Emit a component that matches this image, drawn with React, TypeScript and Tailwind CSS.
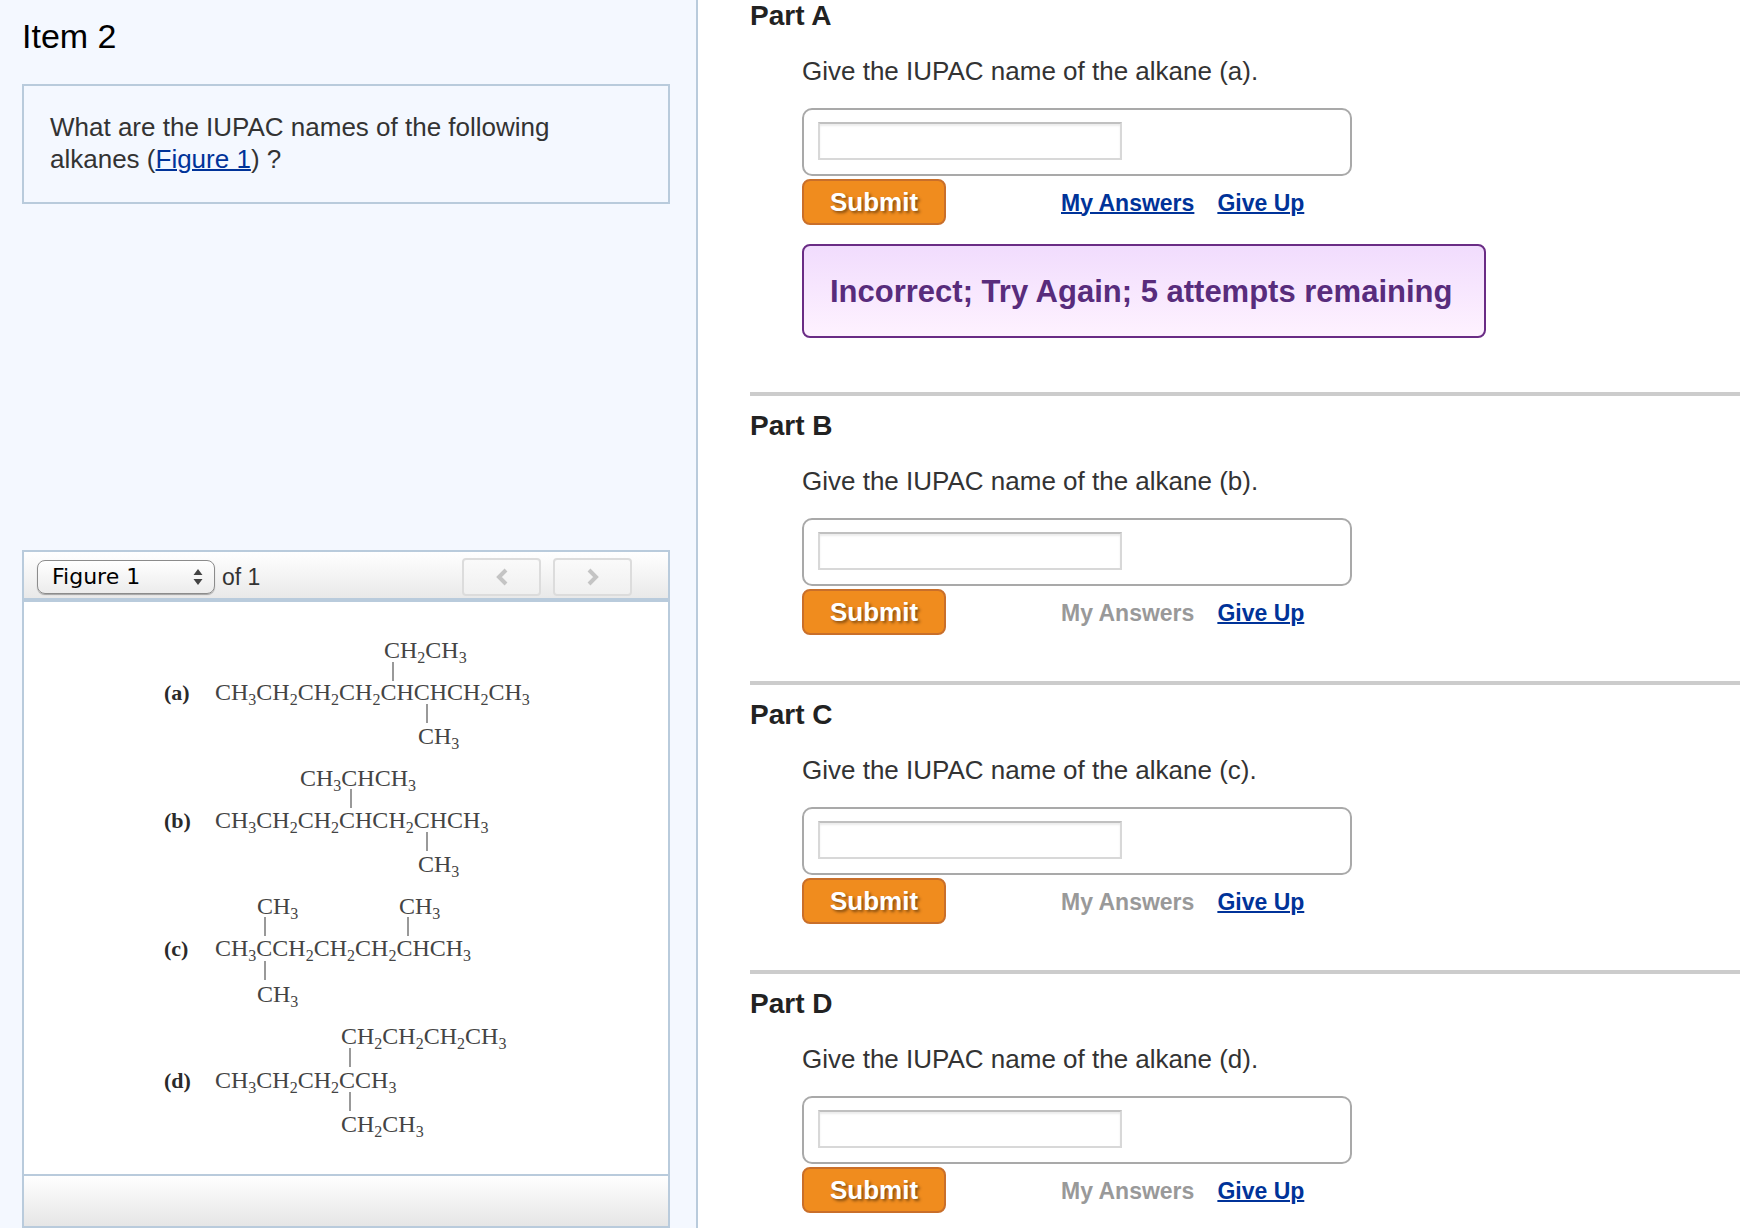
import { useState } from 'react';

type Part = {
  id: string;
  hasAnswers?: boolean;
  feedback?: string;
};

type Formula = { x: number; y: number; value: string };
type Bond = { x: number; y: number };
type Alkane = { label: string; y: number; formulas: Formula[]; bonds: Bond[] };

const parts: Part[] = [
  { id: 'A', hasAnswers: true, feedback: 'Incorrect; Try Again; 5 attempts remaining' },
  { id: 'B' },
  { id: 'C' },
  { id: 'D' },
];

const alkanes: Alkane[] = [
  {
    label: '(a)',
    y: 98,
    formulas: [
      { x: 360, y: 56, value: 'CH2CH3' },
      { x: 191, y: 98, value: 'CH3CH2CH2CH2CHCHCH2CH3' },
      { x: 394, y: 142, value: 'CH3' },
    ],
    bonds: [
      { x: 368, y: 60 },
      { x: 402, y: 102 },
    ],
  },
  {
    label: '(b)',
    y: 226,
    formulas: [
      { x: 276, y: 184, value: 'CH3CHCH3' },
      { x: 191, y: 226, value: 'CH3CH2CH2CHCH2CHCH3' },
      { x: 394, y: 270, value: 'CH3' },
    ],
    bonds: [
      { x: 326, y: 187 },
      { x: 402, y: 230 },
    ],
  },
  {
    label: '(c)',
    y: 354,
    formulas: [
      { x: 233, y: 312, value: 'CH3' },
      { x: 375, y: 312, value: 'CH3' },
      { x: 191, y: 354, value: 'CH3CCH2CH2CH2CHCH3' },
      { x: 233, y: 400, value: 'CH3' },
    ],
    bonds: [
      { x: 240, y: 315 },
      { x: 383, y: 315 },
      { x: 240, y: 359 },
    ],
  },
  {
    label: '(d)',
    y: 486,
    formulas: [
      { x: 317, y: 442, value: 'CH2CH2CH2CH3' },
      { x: 191, y: 486, value: 'CH3CH2CH2CCH3' },
      { x: 317, y: 530, value: 'CH2CH3' },
    ],
    bonds: [
      { x: 325, y: 446 },
      { x: 325, y: 490 },
    ],
  },
];

function FormulaText({ x, y, value }: Formula) {
  // Split into atoms and subscript counts, e.g. CH | 3 | CH | 2
  const pieces = value.split(/(\d)/).filter(Boolean);

  return (
    <text x={x} y={y} fontSize={24} fill="#444">
      {pieces.map((piece, i) => {
        const isCount = /\d/.test(piece);
        const afterCount = i > 0 && !isCount;
        return (
          <tspan key={i} fontSize={isCount ? 16 : 24} dy={isCount ? 5 : afterCount ? -5 : 0}>
            {piece}
          </tspan>
        );
      })}
    </text>
  );
}

function AlkaneFigure() {
  return (
    <svg
      viewBox="0 0 644 572"
      className="block w-full font-['Liberation_Serif',serif]"
      role="img"
      aria-label="Alkane structures"
    >
      {alkanes.map((alkane) => (
        <g key={alkane.label}>
          <text x={140} y={alkane.y} fontSize={22} fontWeight="bold" fill="#2a2a2a">
            {alkane.label}
          </text>
          {alkane.formulas.map((formula, i) => (
            <FormulaText key={i} {...formula} />
          ))}
          {alkane.bonds.map((bond, i) => (
            <rect key={i} x={bond.x} y={bond.y} width={2} height={19} fill="#999" />
          ))}
        </g>
      ))}
    </svg>
  );
}

function PagerButton({ label, points }: { label: string; points: string }) {
  return (
    <button
      type="button"
      disabled
      aria-label={label}
      className="flex h-[38px] w-[79px] items-center justify-center rounded-sm border-2 border-[#dcdcdc] bg-linear-to-b from-[#fafafa] to-[#f0f0f0]"
    >
      <svg width="14" height="18" viewBox="0 0 14 18" fill="none" stroke="#c4c4c4" strokeWidth="4">
        <polyline points={points} />
      </svg>
    </button>
  );
}

function FigurePanel() {
  return (
    <section id="figure-1" className="mt-auto border-2 border-[#b9cbdc] bg-white">
      <div className="flex h-[50px] items-center border-b-4 border-[#b9cbdc] bg-linear-to-b from-white to-[#e9e9e9] pl-[13px] pr-9 pt-1">
        <div className="relative">
          <select
            aria-label="Figure"
            className="block h-[34px] w-[178px] appearance-none rounded-lg border border-[#8c8c8c] bg-linear-to-b from-white to-[#ececec] pl-[14px] font-['DejaVu_Sans',sans-serif] text-[22px] leading-7 text-black shadow-[0_1px_1px_rgba(0,0,0,0.3)]"
          >
            <option>Figure 1</option>
          </select>
          <svg
            className="pointer-events-none absolute right-3 top-[9px]"
            width="10"
            height="16"
            viewBox="0 0 10 16"
            fill="#444"
          >
            <path d="M5 0 9.500 6H.5zM5 16 .5 10h9z" />
          </svg>
        </div>
        <span className="ml-[7px] text-[23px] text-[#333]">of 1</span>
        <div className="ml-auto flex gap-3">
          <PagerButton label="Previous figure" points="11,2 4,9 11,16" />
          <PagerButton label="Next figure" points="3,2 10,9 3,16" />
        </div>
      </div>
      <AlkaneFigure />
      <div className="h-[52px] border-t-2 border-[#b9cbdc] bg-linear-to-b from-white to-[#e6e6e6]" />
    </section>
  );
}

function PartSection({ part }: { part: Part }) {
  const [answer, setAnswer] = useState('');
  const inputId = `answer-${part.id}`;

  return (
    <section className="border-b-4 border-[#ccc] pb-[46px] last:border-b-0 last:pb-0">
      <h2 className="text-[28px] font-bold leading-8 text-[#222]">Part {part.id}</h2>
      <form className="mt-[23px] pl-[52px]" onSubmit={(e) => e.preventDefault()}>
        <label htmlFor={inputId} className="block text-[26px] leading-8 text-[#333]">
          Give the IUPAC name of the alkane ({part.id.toLowerCase()}).
        </label>
        <div className="mt-[21px] max-w-[550px] rounded-[10px] border-2 border-[#a9a9a9] px-[14px] pb-[14px] pt-3">
          <input
            id={inputId}
            type="text"
            value={answer}
            onChange={(e) => setAnswer(e.target.value)}
            className="block h-[38px] w-[304px] border-2 border-[#d8d8d8] border-t-[#c0c0c0] bg-white px-2 text-[22px] shadow-[inset_0_2px_2px_rgba(0,0,0,0.08)] outline-none"
          />
        </div>
        <div className="mt-[3px] flex items-center text-[23px] font-bold">
          <button
            type="submit"
            className="h-[46px] w-36 rounded-lg border-2 border-[#c96f2a] bg-[#f08c1e] text-[26px] leading-8 text-white [text-shadow:2px_2px_3px_rgba(0,0,0,0.45)]"
          >
            Submit
          </button>
          <div className="ml-[115px] flex gap-[23px] pt-[2px]">
            {part.hasAnswers ? (
              <a href="#answers" className="text-[#039] underline decoration-2">
                My Answers
              </a>
            ) : (
              <span className="text-[#999]">My Answers</span>
            )}
            <a href="#give-up" className="text-[#039] underline decoration-2">
              Give Up
            </a>
          </div>
        </div>
        {part.feedback && (
          <p className="mb-2 mt-[19px] w-fit rounded-lg border-2 border-[#6a2c85] bg-linear-to-b from-[#f1dcfd] to-[#fef2ff] pb-[27px] pl-[26px] pr-8 pt-[29px] text-[31px] font-bold leading-[34px] text-[#582c7c]">
            {part.feedback}
          </p>
        )}
      </form>
    </section>
  );
}

export default function App() {
  return (
    <div className="flex min-h-screen bg-white font-['Liberation_Sans',Arial,sans-serif]">
      <aside className="flex w-[698px] shrink-0 flex-col border-r-2 border-[#b9cbdc] bg-[#f4f8ff] pl-[22px] pr-[26px] pt-4">
        <h1 className="text-[34px] leading-10 text-black">Item 2</h1>
        <div className="mb-8 mt-7 border-2 border-[#b9cbdc] px-[26px] pb-[27px] pt-[25px] text-[26px] leading-8 text-[#333]">
          <p className="max-w-[520px]">
            What are the IUPAC names of the following alkanes (
            <a href="#figure-1" className="text-[#039] underline decoration-2">
              Figure 1
            </a>
            ) ?
          </p>
        </div>
        <FigurePanel />
      </aside>
      <main className="flex min-w-0 flex-1 flex-col gap-[14px] pl-[52px]">
        {parts.map((part) => (
          <PartSection key={part.id} part={part} />
        ))}
      </main>
    </div>
  );
}
